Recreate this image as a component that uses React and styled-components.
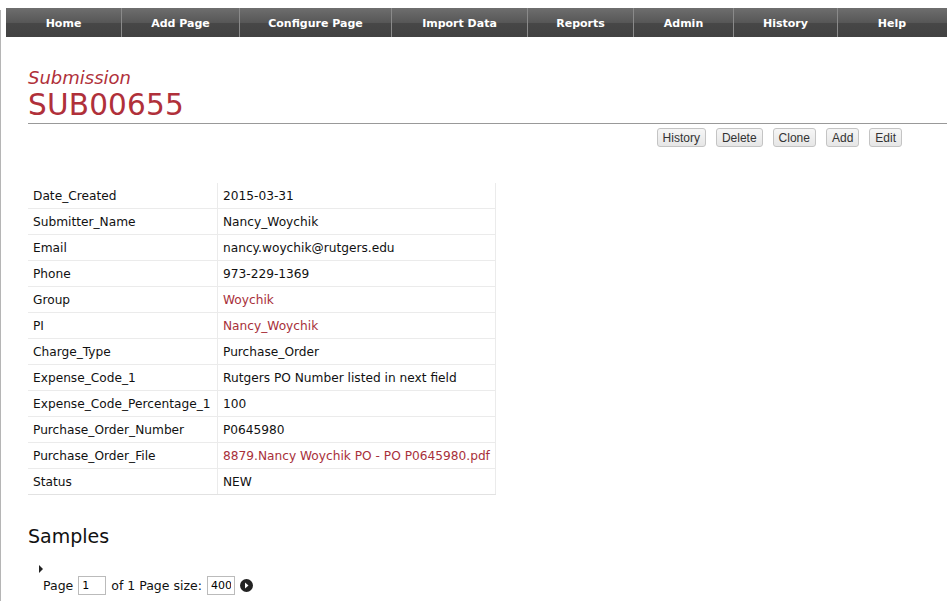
import React from 'react';
import styled, { createGlobalStyle } from 'styled-components';

const Global = createGlobalStyle`
  html, body {
    margin: 0;
    padding: 0;
    background: #fff;
    overflow: hidden;
  }
  body {
    font-family: "DejaVu Sans", Verdana, sans-serif;
    color: #111;
  }
`;

const Page = styled.div`
  position: relative;
  width: 947px;
  height: 601px;
  padding-top: 8px;
  box-sizing: border-box;
  overflow: hidden;
`;

const Frame = styled.div`
  position: absolute;
  left: 0;
  top: 10px;
  bottom: 0;
  width: 1px;
  background: #b5b5b5;
`;

const Nav = styled.div`
  display: grid;
  grid-template-columns: 115px 118px 152px 136px 106px 100px 104px 109px;
  margin-left: 6px;
  height: 29px;
  background: linear-gradient(#6e6e6e 0%, #575757 50%, #474747 51%, #424242 100%);
`;

const NavItem = styled.div`
  display: flex;
  align-items: center;
  justify-content: center;
  padding-top: 2px;
  color: #fff;
  font-family: "DejaVu Sans", Tahoma, sans-serif;
  font-weight: bold;
  font-size: 11px;
  border-left: ${p => (p.first ? 'none' : '1px solid #8a8a8a')};
`;

const TopLinks = styled.div`
  display: flex;
  justify-content: flex-end;
  height: 14px;
  padding-top: 5px;
  font-size: 11px;
  color: #c0202a;
  white-space: nowrap;
  span {
    margin-right: -60px;
  }
`;

const Header = styled.div`
  margin-left: 28px;
  padding-top: 12px;
  border-bottom: 1px solid #999;
`;

const Kind = styled.div`
  color: #b0303a;
  font-style: italic;
  font-size: 18px;
  line-height: 20px;
`;

const Title = styled.h1`
  margin: 0;
  color: #b0303a;
  font-weight: normal;
  font-size: 29.5px;
  line-height: 35px;
  letter-spacing: 0.2px;
`;

const Actions = styled.div`
  display: flex;
  justify-content: flex-end;
  gap: 10px;
  padding: 4px 45px 0 0;
  height: 22px;
`;

const Btn = styled.button`
  height: 19px;
  padding: 0 5px;
  font-family: "Liberation Sans", Arial, sans-serif;
  font-size: 12px;
  color: #333;
  border: 1px solid #c4c4c4;
  border-radius: 3px;
  background: linear-gradient(#f6f6f6, #e6e6e6);
`;

const Table = styled.table`
  margin: 33px 0 0 28px;
  border-collapse: collapse;
  width: 468px;
  font-size: 12.2px;
  white-space: nowrap;
  td {
    height: 25px;
    padding: 0 5px;
    border-bottom: 1px solid #ebebeb;
    border-right: 1px solid #ebebeb;
  }
  tr:last-child td {
    border-bottom: 1px solid #e2e2e2;
  }
`;

const Label = styled.td`
  width: 179px;
`;

const Value = styled.td`
  color: ${p => (p.link ? '#a8303a' : '#111')};
`;

const Samples = styled.h2`
  margin: 29px 0 0 28px;
  font-weight: normal;
  font-size: 19px;
  line-height: 24px;
`;

const Expander = styled.div`
  margin: 17px 0 0 39px;
  width: 0;
  height: 0;
  border-top: 4px solid transparent;
  border-bottom: 4px solid transparent;
  border-left: 4px solid #222;
`;

const Pager = styled.div`
  display: flex;
  align-items: center;
  gap: 5px;
  margin: 3px 0 0 43px;
  font-size: 12.5px;
`;

const PageInput = styled.input`
  width: 28px;
  height: 19px;
  box-sizing: border-box;
  border: 1px solid #bbb;
  padding: 0 3px;
  font-family: "DejaVu Sans", Verdana, sans-serif;
  font-size: 11px;
`;

const rows = [
  ['Date_Created', '2015-03-31'],
  ['Submitter_Name', 'Nancy_Woychik'],
  ['Email', 'nancy.woychik@rutgers.edu'],
  ['Phone', '973-229-1369'],
  ['Group', 'Woychik', true],
  ['PI', 'Nancy_Woychik', true],
  ['Charge_Type', 'Purchase_Order'],
  ['Expense_Code_1', 'Rutgers PO Number listed in next field'],
  ['Expense_Code_Percentage_1', '100'],
  ['Purchase_Order_Number', 'P0645980'],
  ['Purchase_Order_File', '8879.Nancy Woychik PO - PO P0645980.pdf', true],
  ['Status', 'NEW'],
];

const navItems = ['Home', 'Add Page', 'Configure Page', 'Import Data', 'Reports', 'Admin', 'History', 'Help'];

export default function App() {
  return (
    <Page>
      <Global />
      <Frame />
      <Nav>
        {navItems.map((n, i) => (
          <NavItem key={n} first={i === 0}>{n}</NavItem>
        ))}
      </Nav>
      <TopLinks><span>[Sign out]</span></TopLinks>
      <Header>
        <Kind>Submission</Kind>
        <Title>SUB00655</Title>
      </Header>
      <Actions>
        {['History', 'Delete', 'Clone', 'Add', 'Edit'].map(b => (
          <Btn key={b}>{b}</Btn>
        ))}
      </Actions>
      <Table>
        <tbody>
          {rows.map(([k, v, link]) => (
            <tr key={k}>
              <Label>{k}</Label>
              <Value link={link}>{v}</Value>
            </tr>
          ))}
        </tbody>
      </Table>
      <Samples>Samples</Samples>
      <Expander />
      <Pager>
        Page <PageInput defaultValue="1" /> of 1 Page size: <PageInput defaultValue="400" />
        <svg width="13" height="13" viewBox="0 0 13 13">
          <circle cx="6.5" cy="6.5" r="6.5" fill="#222" />
          <path d="M5 3.5 L8.5 6.5 L5 9.5 Z" fill="#fff" />
        </svg>
      </Pager>
    </Page>
  );
}
